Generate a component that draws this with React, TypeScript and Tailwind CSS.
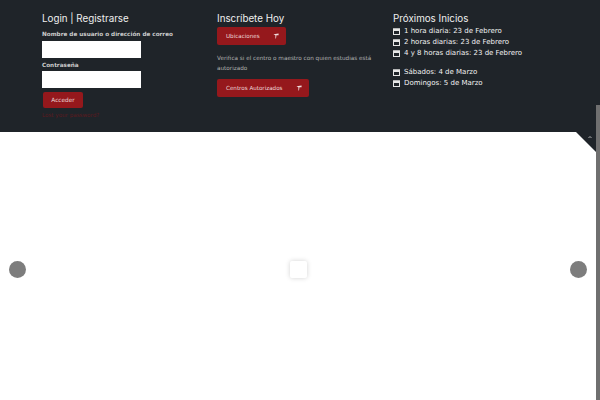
import React from 'react'

const textFont = "font-['DejaVu_Sans',sans-serif]"
const headingFont = "font-['Inter',sans-serif]"

const CalendarIcon: React.FC = () => (
  <svg width="7" height="7" viewBox="0 0 7 7" className="shrink-0">
    <rect x="0.5" y="1" width="6" height="5.5" fill="none" stroke="#e6e6e6" strokeWidth="1" />
    <rect x="0" y="0.5" width="7" height="2.5" fill="#e6e6e6" />
  </svg>
)

const PinIcon: React.FC = () => (
  <svg width="6" height="6" viewBox="0 0 7 7" className="shrink-0">
    <path d="M0.5 1.5 L6.5 0.5 L6.5 2.5 L4 2.5 L3.5 6.5 L2.8 6.5 L2.8 2.5 Z" fill="#f0dcdc" />
  </svg>
)

const RedButton: React.FC<{ label: string; width: string }> = ({ label, width }) => (
  <div className={`flex items-center justify-between h-[18px] pl-[9px] pr-[7px] bg-[#95181c] rounded-[2px] text-[5.6px] text-[#ecd6d6] ${width}`}>
    <span>{label}</span>
    <PinIcon />
  </div>
)

const lines = ['1 hora diaria: 23 de Febrero', '2 horas diarias: 23 de Febrero', '4 y 8 horas diarias: 23 de Febrero']
const weekends = ['Sábados: 4 de Marzo', 'Domingos: 5 de Marzo']

const DateRow: React.FC<{ text: string }> = ({ text }) => (
  <div className="flex items-center gap-[4px] h-[11px] text-[7px] text-[#f2f2f2]">
    <CalendarIcon />
    <span>{text}</span>
  </div>
)

const App: React.FC = () => {
  return (
    <div className={`relative flex h-[400px] w-[600px] overflow-hidden bg-white ${textFont}`}>
      <div className="flex-1 flex flex-col">
        <div className="h-[132px] bg-[#1f2429] flex pl-[42px] pt-[12px]">
          <div className="w-[175px]">
            <h3 className={`text-[9.8px] leading-[13px] text-[#efefef] ${headingFont}`}>Login | Registrarse</h3>
            <label className="block mt-[5px] text-[5.7px] leading-[9px] font-bold text-[#cccccc]">Nombre de usuario o dirección de correo</label>
            <div className="mt-[2px] h-[17px] w-[99px] bg-white" />
            <label className="block mt-[2px] text-[5.7px] leading-[10px] font-bold text-[#cccccc]">Contraseña</label>
            <div className="mt-[1px] h-[17px] w-[99px] bg-white" />
            <div className="mt-[4px] ml-[1px] flex items-center justify-center h-[16px] w-[40px] bg-[#95181c] rounded-[2px] text-[5.8px] text-[#ecd6d6]">Acceder</div>
            <div className="mt-[3px] text-[5.6px] leading-[9px] text-[#5c1a1f]">Lost your password?</div>
          </div>
          <div className="w-[176px]">
            <h3 className={`text-[9.8px] leading-[13px] text-[#efefef] ${headingFont}`}>Inscríbete Hoy</h3>
            <div className="mt-[2px]">
              <RedButton label="Ubicaciones" width="w-[69px]" />
            </div>
            <p className="mt-[8px] w-[170px] text-[5.7px] leading-[10px] text-[#b0b0b0]">Verifica si el centro o maestro con quien estudias está autorizado</p>
            <div className="mt-[6px]">
              <RedButton label="Centros Autorizados" width="w-[92px]" />
            </div>
          </div>
          <div className="flex-1">
            <h3 className={`text-[9.8px] leading-[13px] text-[#efefef] ${headingFont}`}>Próximos Inicios</h3>
            <div className="mt-[1px]">
              {lines.map((line) => <DateRow key={line} text={line} />)}
            </div>
            <div className="mt-[8px]">
              {weekends.map((line) => <DateRow key={line} text={line} />)}
            </div>
          </div>
        </div>
        <div className="flex-1 flex items-center justify-between pl-[9px] pr-[9px] pt-[6px]">
          <div className="h-[17px] w-[17px] rounded-full bg-[#7d7d7d]" />
          <div className="h-[17px] w-[17px] bg-white rounded-[2px] shadow-[0_0_5px_rgba(0,0,0,0.18)]" />
          <div className="h-[17px] w-[17px] rounded-full bg-[#7d7d7d]" />
        </div>
      </div>
      <div className="w-[4px] flex flex-col">
        <div className="h-[105px] bg-[#1f2429]" />
        <div className="flex-1 bg-[#6f6f6f]" />
      </div>
      {/* corner toggle over the edge of the panel */}
      <svg width="20" height="20" viewBox="0 0 20 20" className="absolute left-[576px] top-[132px]">
        <path d="M0 0 L20 0 L20 20 Z" fill="#1f2429" />
        <path d="M12.5 6 L14 4.5 L15.5 6" fill="none" stroke="#d0d0d0" strokeWidth="0.8" />
      </svg>
    </div>
  )
}

export default App
